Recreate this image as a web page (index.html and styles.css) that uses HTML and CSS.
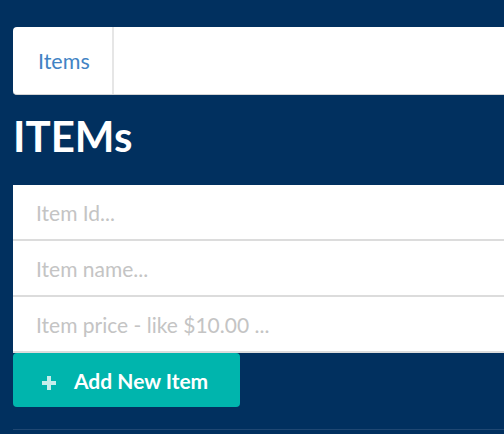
FILE: index.html
```html
<!DOCTYPE html>
<html>
<head>
<meta charset="utf-8">
<link rel="stylesheet" href="styles.css">
</head>
<body>
<div class="page">
  <nav class="menu">
    <a class="menu-item" href="#">Items</a>
  </nav>
  <h1 class="title">ITEMs</h1>
  <form class="form">
    <input class="field" type="text" placeholder="Item Id...">
    <input class="field" type="text" placeholder="Item name...">
    <input class="field" type="text" placeholder="Item price - like $10.00 ...">
    <button class="btn" type="button">
      <svg class="btn-icon" viewBox="0 0 14 14" width="14" height="14"><path d="M5 0h4v5h5v4H9v5H5V9H0V5h5z"/></svg>
      <span>Add New Item</span>
    </button>
  </form>
  <div class="divider"></div>
</div>
</body>
</html>
```

FILE: styles.css
```css
html, body {
  margin: 0;
  padding: 0;
  overflow: hidden;
  background: #01305f;
}
body {
  font-family: Lato, "Open Sans", sans-serif;
}
.page {
  padding: 27px 0 0 13px;
  width: 620px;
}
.menu {
  display: flex;
  height: 67px;
  background: #fff;
  border-bottom: 1px solid #d4d4d5;
  border-radius: 4px 0 0 4px;
}
.menu-item {
  display: flex;
  align-items: center;
  padding: 0 23px 0 25px;
  width: 51px;
  border-right: 2px solid #e6e6e6;
  color: #4183c4;
  font-size: 21.5px;
  text-decoration: none;
}
.title {
  margin: 16px 0 24px;
  color: #fff;
  font-size: 42px;
  line-height: 1.2;
  font-weight: 700;
}
.form {
  display: flex;
  flex-direction: column;
  align-items: flex-start;
}
.field {
  box-sizing: border-box;
  width: 100%;
  height: 56px;
  margin: 0;
  padding: 0 23px;
  border: 0;
  border-bottom: 2px solid #dcdcdc;
  border-radius: 0;
  background: #fff;
  font-family: inherit;
  font-size: 21px;
  outline: none;
}
.field::placeholder {
  color: #c4c4c4;
}
.btn {
  display: flex;
  align-items: center;
  gap: 18px;
  height: 54px;
  margin: 0;
  padding: 0 32px 0 29px;
  border: 0;
  border-radius: 4px;
  background: #00b5ad;
  color: #fff;
  font-family: inherit;
  font-size: 21px;
  font-weight: 700;
}
.btn-icon {
  flex: none;
  margin-top: 5px;
  fill: #c6edeb;
}
.divider {
  margin-top: 22px;
  height: 1px;
  background: #1f4772;
}
```
